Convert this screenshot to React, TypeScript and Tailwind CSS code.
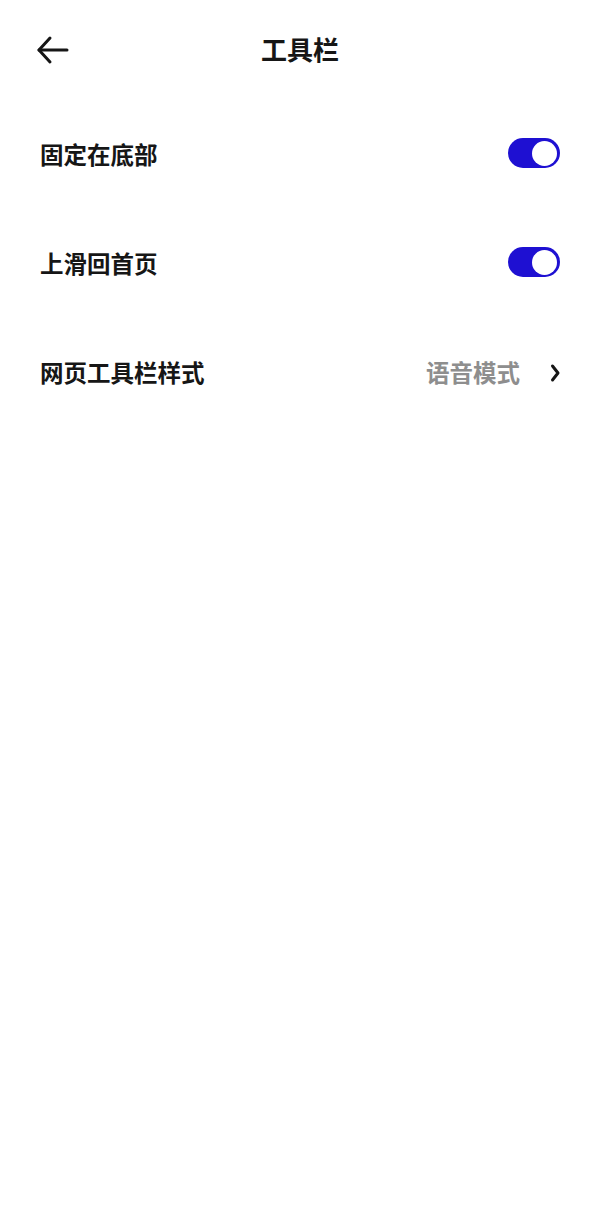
const rows = [
  { label: "固定在底部", type: "switch" as const, on: true },
  { label: "上滑回首页", type: "switch" as const, on: true },
  { label: "网页工具栏样式", type: "link" as const, value: "语音模式" },
];

function Toggle({ on }: { on: boolean }) {
  return (
    <div className={`mb-[3px] flex h-[30px] w-[52px] items-center rounded-full px-[3px] ${on ? "justify-end bg-[#1e10d2]" : "justify-start bg-[#d9d9d9]"}`}>
      <div className="h-[25px] w-[25px] rounded-full bg-white" />
    </div>
  );
}

export default function App() {
  return (
    <main className="min-h-[1229px] w-full bg-white text-[#161616]" style={{ fontFamily: '"Noto Sans CJK SC", "Noto Sans", sans-serif' }}>
      <header className="relative flex h-[100px] items-center justify-center">
        <button className="absolute left-[35px] top-[34px] flex h-[32px] w-[36px] items-center justify-center">
          <svg width="36" height="32" viewBox="0 0 36 32" fill="none" stroke="#161616" strokeWidth="3" strokeLinecap="round" strokeLinejoin="round">
            <path d="M4 16 H32" />
            <path d="M15 4 L4 16 L15 28" />
          </svg>
        </button>
        <h1 className="mb-[2px] text-[26px] font-bold leading-none">工具栏</h1>
      </header>

      <section>
        {rows.map((row) => (
          <div key={row.label} className="flex h-[109px] items-center justify-between px-[40px]">
            <span className="text-[23.5px] font-bold leading-none">{row.label}</span>
            {row.type === "switch" ? (
              <Toggle on={row.on} />
            ) : (
              <div className="flex items-center gap-[30px]">
                <span className="text-[23.5px] font-bold leading-none text-[#8e8e8e]">{row.value}</span>
                <svg width="10" height="20" viewBox="0 0 10 20" fill="none" stroke="#161616" strokeWidth="3" strokeLinecap="round" strokeLinejoin="round">
                  <path d="M2.5 3 L8 10 L2.5 17" />
                </svg>
              </div>
            )}
          </div>
        ))}
      </section>
    </main>
  );
}
